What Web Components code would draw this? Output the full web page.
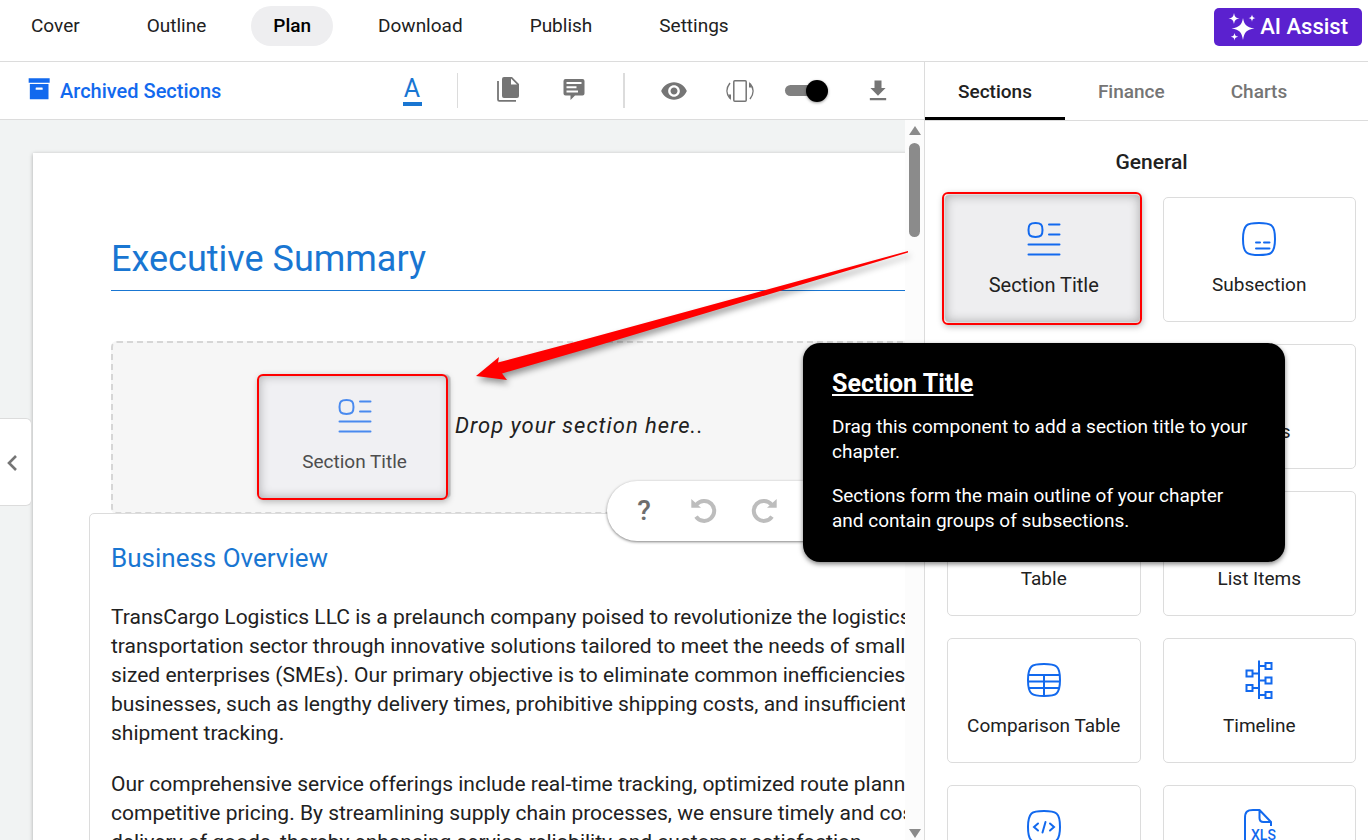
<!DOCTYPE html>
<html lang="en">
<head>
<meta charset="utf-8">
<meta name="viewport" content="width=device-width, initial-scale=1">
<title>Plan editor</title>
<style>
  html, body {
    margin: 0;
    height: 100%;
    overflow: hidden;
  }
  body {
    --blue: #1269ee;
    --heading: #1976d2;
    --line: #dcdcdc;
    --grey: #757575;
    font-family: Roboto, "Liberation Sans", sans-serif;
    font-size: 19px;
    line-height: 24px;
    color: #212121;
    background: #fff;
  }
</style>
</head>
<body>
<plan-app>
  <top-nav slot="nav">
    <nav-link>Cover</nav-link>
    <nav-link>Outline</nav-link>
    <nav-link active>Plan</nav-link>
    <nav-link>Download</nav-link>
    <nav-link>Publish</nav-link>
    <nav-link>Settings</nav-link>
    <assist-button slot="action">AI Assist</assist-button>
  </top-nav>

  <edit-toolbar slot="toolbar">Archived Sections</edit-toolbar>

  <plan-page slot="editor">
    <span slot="title">Executive Summary</span>
    <drop-zone slot="drop">
      Drop your section here..
      <section-tile slot="drag" icon="title" dragging>Section Title</section-tile>
    </drop-zone>
    <sub-section heading="Business Overview">
      <plan-text>TransCargo Logistics LLC is a prelaunch company poised to revolutionize the logistics and transportation sector through innovative solutions tailored to meet the needs of small to medium-sized enterprises (SMEs). Our primary objective is to eliminate common inefficiencies faced by businesses, such as lengthy delivery times, prohibitive shipping costs, and insufficient transparency in shipment tracking.</plan-text>
      <plan-text>Our comprehensive service offerings include real-time tracking, optimized route planning, and competitive pricing. By streamlining supply chain processes, we ensure timely and cost-effective delivery of goods, thereby enhancing service reliability and customer satisfaction.</plan-text>
    </sub-section>
  </plan-page>

  <section-panel slot="panel" heading="General">
    <section-tile icon="title" selected>Section Title</section-tile>
    <section-tile icon="subsection">Subsection</section-tile>
    <section-tile icon="text" label="Text"></section-tile>
    <section-tile icon="image">Images</section-tile>
    <section-tile icon="table">Table</section-tile>
    <section-tile icon="list">List Items</section-tile>
    <section-tile icon="table">Comparison Table</section-tile>
    <section-tile icon="timeline">Timeline</section-tile>
    <section-tile icon="code" label="Embed"></section-tile>
    <section-tile icon="xls" label="Excel"></section-tile>
  </section-panel>

  <history-bar slot="overlay"></history-bar>
  <drag-arrow slot="overlay"></drag-arrow>
  <help-tip slot="overlay" heading="Section Title">
    <p>Drag this component to add a section title to your chapter.</p>
    <p>Sections form the main outline of your chapter and contain groups of subsections.</p>
  </help-tip>
</plan-app>

<script>
// small base class: every element renders a css block and some html
class PlanElement extends HTMLElement {
  constructor() {
    super();
    this.attachShadow({ mode: "open" });
  }

  connectedCallback() {
    this.shadowRoot.innerHTML = `<style>${this.css()}</style>${this.html()}`;
  }

  css() {
    return ":host { display: block; }";
  }

  html() {
    return "<slot></slot>";
  }
}

const SQUIRCLE = "M20 4c6 0 10 .5 12.500 2.500S36 13 36 20s-1 11-3.500 13.500S26 36 20 36s-10-.5-12.500-2.500S4 27 4 20s1-11 3.500-13.500S14 4 20 4z";

// [viewBox, markup]; fill and stroke both follow currentColor
const ICONS = {
  archive: ["-1 2 24 24", `<path fill="currentColor" d="M3 3h18v4H3zM4 8h16v13H4zM9.500 11a.5.5 0 0 0-.5.5V13h6v-1.500a.5.5 0 0 0-.5-.5z" fill-rule="evenodd"/>`],
  copy: ["0 2 28 28", `<path fill="none" stroke="currentColor" stroke-width="1.800" d="M4 6v18.500a1.300 1.300 0 0 0 1.300 1.300H22"/><path fill="currentColor" fill-rule="evenodd" d="M10 2h8l7 7v12a2 2 0 0 1-2 2H10a2 2 0 0 1-2-2V4a2 2 0 0 1 2-2zM17 3.500v6h6z"/>`],
  comment: ["0 0 28 28", `<path fill="currentColor" fill-rule="evenodd" d="M5.500 2h17a2 2 0 0 1 2 2v12.500a2 2 0 0 1-2 2H15L10.500 23v-4.500h-5a2 2 0 0 1-2-2V4a2 2 0 0 1 2-2zM6.500 5v2h15V5zM6.500 9.300v2h10v-2zM6.500 13.500v2h11.500v-2z"/>`],
  eye: ["0 0 24 24", `<path fill="currentColor" d="M12 4.500C7 4.500 2.730 7.610 1 12c1.730 4.390 6 7.500 11 7.500s9.270-3.110 11-7.500c-1.730-4.390-6-7.500-11-7.500zM12 17c-2.760 0-5-2.240-5-5s2.240-5 5-5 5 2.240 5 5-2.240 5-5 5zm0-8c-1.660 0-3 1.340-3 3s1.340 3 3 3 3-1.340 3-3-1.340-3-3-3z"/>`],
  rotate: ["0 0 28 28", `<g fill="none" stroke="currentColor" stroke-width="1.500"><rect x="7.800" y="3.800" width="12.400" height="20.400" rx="1"/><path d="M4 6C0 11 0 17 4 21.500M24 22c4-5 4-11 0-15.500"/></g><path fill="currentColor" d="M2 17.500h3v6zM26 10.500h-3v-6z"/>`],
  download: ["0 0 24 24", `<path fill="currentColor" d="M18.500 9.500H15V3H9v6.500H5.500L12 16zM5 18v2h14v-2z"/>`],
  sparkle: ["0 0 28 28", `<path fill="currentColor" d="M15 5c1.500 7 3 9 11.500 10.500C18 17 16.500 19 15 27c-1.500-8-3-10-11.500-11.500C12 14 13.500 12 15 5zM6 0c.8 4 1.600 4.800 5.500 5.500C7.600 6.200 6.800 7 6 11 5.200 7 4.400 6.200.5 5.500 4.400 4.800 5.200 4 6 0zM24 1.500c.5 2.600 1.100 3.100 3.500 3.600-2.400.5-3 1-3.500 3.600-.5-2.600-1.100-3.100-3.500-3.600 2.400-.5 3-1 3.500-3.600zM6.500 20c.5 2.600 1.100 3.200 3.700 3.700-2.600.5-3.200 1.100-3.700 3.700-.5-2.600-1.100-3.200-3.700-3.700 2.600-.5 3.200-1.100 3.700-3.700z"/>`],
  undo: ["-2 -1 28 28", `<path fill="none" stroke="currentColor" stroke-width="4" d="M4.500 6.500A10 10 0 1 1 4 18.600"/><path fill="currentColor" d="M-.7 1v8.800H9z"/>`],
  chevron: ["0 0 24 24", `<path fill="none" stroke="currentColor" stroke-width="2.600" d="M16 6l-7 7 7 7"/>`],
  title: ["0 0 40 40", `<g fill="none" stroke="currentColor" stroke-width="2" stroke-linecap="round"><path d="M11.500 4c5.500 0 7 1.500 7 7s-1.500 7-7 7-7-1.500-7-7 1.500-7 7-7z"/><path d="M25 5.500h10.500M25 15.500h10.500M4.500 25.500h31M4.500 35.500h31"/></g>`],
  subsection: ["0 0 40 40", `<g fill="none" stroke="currentColor" stroke-width="2" stroke-linecap="round"><path d="${SQUIRCLE}"/><path d="M17 23.500h4M25 23.500h5.500M17 29.500h13.500"/></g>`],
  text: ["0 0 40 40", `<path fill="none" stroke="currentColor" stroke-width="2" d="M5 8h30M5 16h30M5 24h30M5 32h18"/>`],
  image: ["0 0 40 40", `<path fill="none" stroke="currentColor" stroke-width="2" d="${SQUIRCLE}M6 30l9-10 7 8 5-5 8 7"/>`],
  table: ["0 0 40 40", `<path fill="none" stroke="currentColor" stroke-width="2" d="${SQUIRCLE}M4.500 15h31M4 21.500h32M4.500 28h31M20 15v21"/>`],
  list: ["0 0 40 40", `<path fill="none" stroke="currentColor" stroke-width="2" d="M5 9h4M14 9h21M5 20h4M14 20h21M5 31h4M14 31h21"/>`],
  timeline: ["0 0 40 40", `<path fill="none" stroke="currentColor" stroke-width="2" d="M20 .5V39M20 6h6M20 20.500h6M20 35h6M14 13.500h6M14 28h6M26.500 3h6v6h-6zM26.500 17.500h6v6h-6zM26.500 32h6v6h-6zM7.500 10.500h6v6h-6zM7.500 25h6v6h-6z"/>`],
  code: ["0 0 40 40", `<g fill="none" stroke="currentColor" stroke-width="2" stroke-linecap="round"><path d="${SQUIRCLE}"/><path d="M14 16.500l-4 3.500 4 3.500M26 16.500l4 3.500-4 3.500M21.500 15l-3 10.500"/></g>`],
  xls: ["0 0 40 40", `<path fill="none" stroke="currentColor" stroke-width="2" stroke-linejoin="round" d="M6 33V11c0-6 2-8 8-8h6.500l11.500 12v4M20.500 3v8c0 3 1.500 4 4 4h7M6 33c0 3 2 4 6 4"/><text x="12" y="33" fill="currentColor" font-family="Roboto, sans-serif" font-size="14" font-weight="500">XLS</text>`]
};

class PlanIcon extends PlanElement {
  css() {
    return `
      :host { display: block; width: var(--icon-size, 28px); height: var(--icon-size, 28px); flex: none; }
      svg { display: block; width: 100%; height: 100%; overflow: visible; }
    `;
  }

  html() {
    const [box, markup] = ICONS[this.getAttribute("name")];
    return `<svg viewBox="${box}" aria-hidden="true">${markup}</svg>`;
  }
}

class PlanApp extends PlanElement {
  css() {
    return `
      :host {
        position: relative;
        display: grid;
        grid-template: auto minmax(0, 1fr) / minmax(0, 1fr) 443px;
        height: 100vh;
        overflow: hidden;
      }
      header { grid-column: 1 / -1; }
      main { display: flex; flex-direction: column; min-width: 0; min-height: 0; border-right: 1px solid var(--line); }
      .workspace { position: relative; flex: 1; display: flex; min-height: 0; background: #f1f3f3; }
      .canvas { flex: 1; min-width: 0; overflow: hidden; padding: 33px 0 0 33px; }
      .scrollbar {
        width: 19px;
        box-sizing: border-box;
        display: flex;
        flex-direction: column;
        align-items: center;
        justify-content: space-between;
        padding: 6px 0 2px;
        background: #fcfcfc;
      }
      .up, .down { border: 6px solid transparent; }
      .up { border-top: 0; border-bottom: 9px solid #8b8b8b; }
      .down { border-bottom: 0; border-top: 9px solid #8b8b8b; }
      .track { flex: 1; padding-top: 8px; }
      .thumb { width: 11px; height: 94px; border-radius: 6px; background: #8b8b8b; }
      .collapse {
        position: absolute;
        left: 0;
        top: 298px;
        width: 32px;
        height: 88px;
        padding: 0;
        border: 1px solid var(--line);
        border-left: 0;
        border-radius: 0 6px 6px 0;
        background: #fff;
        color: var(--grey);
        --icon-size: 24px;
      }
    `;
  }

  html() {
    return `
      <header><slot name="nav"></slot></header>
      <main>
        <slot name="toolbar"></slot>
        <div class="workspace">
          <div class="canvas"><slot name="editor"></slot></div>
          <div class="scrollbar"><i class="up"></i><div class="track"><div class="thumb"></div></div><i class="down"></i></div>
          <button class="collapse" aria-label="Collapse"><plan-icon name="chevron"></plan-icon></button>
        </div>
      </main>
      <slot name="panel"></slot>
      <slot name="overlay"></slot>
    `;
  }
}

class TopNav extends PlanElement {
  css() {
    return `
      :host {
        display: flex;
        justify-content: space-between;
        align-items: flex-start;
        box-sizing: border-box;
        min-height: 62px;
        padding: 6px 6px 0 9px;
        border-bottom: 1px solid var(--line);
      }
      nav { display: flex; gap: 23px; }
    `;
  }

  html() {
    return `<nav><slot></slot></nav><slot name="action"></slot>`;
  }
}

class NavLink extends PlanElement {
  css() {
    return `
      :host { display: block; }
      a { display: block; padding: 8px 22px; border-radius: 20px; color: inherit; text-decoration: none; }
      :host([active]) a { background: #eeeef0; color: #000; font-weight: 500; }
    `;
  }

  html() {
    return `<a href="#"><slot></slot></a>`;
  }
}

class AssistButton extends PlanElement {
  css() {
    return `
      :host { display: block; padding-top: 2px; }
      button {
        display: flex;
        align-items: center;
        gap: 4px;
        height: 38px;
        padding: 0 14px;
        border: 0;
        border-radius: 5px;
        background: #5b21cf;
        color: #fff;
        font: 500 22px/24px Roboto, sans-serif;
      }
    `;
  }

  html() {
    return `<button><plan-icon name="sparkle"></plan-icon><slot></slot></button>`;
  }
}

class EditToolbar extends PlanElement {
  css() {
    return `
      :host {
        display: flex;
        justify-content: space-between;
        align-items: center;
        box-sizing: border-box;
        height: 58px;
        padding: 0 24px;
        border-bottom: 1px solid var(--line);
        background: #fff;
      }
      button { display: flex; align-items: center; justify-content: center; padding: 0; border: 0; background: none; color: var(--grey); font: inherit; }
      .archive { gap: 8px; color: var(--blue); font-size: 20px; font-weight: 500; }
      .tools, .group { display: flex; align-items: center; }
      .group { gap: 22px; }
      .group button { width: 44px; height: 44px; }
      .divider { width: 1px; height: 35px; background: var(--line); margin: 0 28px 0 23px; }
      .divider.wide { width: 2px; margin: 0 27px; }
      .group .color { color: var(--heading); }
      .color span { width: 19px; border-bottom: 4px solid; font-size: 25px; line-height: 26px; text-align: center; }
      input {
        appearance: none;
        display: flex;
        align-items: center;
        justify-content: flex-end;
        width: 43px;
        height: 11px;
        margin: 0 6px 0 1px;
        border-radius: 6px;
        background: linear-gradient(to right, #808080 36px, transparent 36px);
      }
      input::before { content: ""; width: 22px; height: 22px; border-radius: 50%; background: #000; box-shadow: 0 1px 3px rgba(0, 0, 0, .4); }
    `;
  }

  html() {
    return `
      <button class="archive"><plan-icon name="archive"></plan-icon><slot></slot></button>
      <div class="tools">
        <div class="group"><button class="color" aria-label="Text color"><span>A</span></button></div>
        <i class="divider"></i>
        <div class="group">
          <button aria-label="Copy"><plan-icon name="copy"></plan-icon></button>
          <button aria-label="Comment"><plan-icon name="comment"></plan-icon></button>
        </div>
        <i class="divider wide"></i>
        <div class="group">
          <button aria-label="Preview"><plan-icon name="eye"></plan-icon></button>
          <button aria-label="Rotate"><plan-icon name="rotate"></plan-icon></button>
          <input type="checkbox" role="switch" aria-label="Show drafts" checked>
          <button class="download" aria-label="Download"><plan-icon name="download"></plan-icon></button>
        </div>
      </div>
    `;
  }
}

class PlanPage extends PlanElement {
  css() {
    return `
      :host { display: block; width: 1102px; box-sizing: border-box; min-height: 900px; padding: 82px 78px 0; background: #fff; box-shadow: 0 1px 4px rgba(0, 0, 0, .3); }
      h1 { margin: 0 0 50px; padding-bottom: 7px; border-bottom: 1px solid var(--heading); color: var(--heading); font-weight: 400; font-size: 36px; line-height: 48px; }
    `;
  }

  html() {
    return `<h1><slot name="title"></slot></h1><slot name="drop"></slot><slot></slot>`;
  }
}

class DropZone extends PlanElement {
  css() {
    return `
      :host {
        position: relative;
        display: block;
        box-sizing: border-box;
        height: 173px;
        padding: 71px 0 0 342px;
        border: 2px dashed #d6d6d6;
        border-radius: 6px;
        background: #f6f6f6;
        font-size: 22px;
        font-style: italic;
        letter-spacing: 1px;
      }
      ::slotted([slot="drag"]) { position: absolute; left: 145px; top: 31px; width: 193px; font-size: 19px; font-style: normal; letter-spacing: normal; }
    `;
  }

  html() {
    return `<slot></slot><slot name="drag"></slot>`;
  }
}

class SubSection extends PlanElement {
  css() {
    return `
      :host { display: block; position: relative; margin: -1px -22px 0; padding: 28px 21px; border: 1px solid var(--line); border-radius: 5px; background: #fff; }
      h2 { margin: 0 0 29px; color: var(--heading); font-weight: 400; font-size: 26px; line-height: 32px; }
    `;
  }

  html() {
    return `<h2>${this.getAttribute("heading")}</h2><slot></slot>`;
  }
}

class PlanText extends PlanElement {
  css() {
    return `
      :host { display: block; }
      p { margin: 0 0 22px; font-size: 21px; line-height: 29px; }
    `;
  }

  html() {
    return `<p><slot></slot></p>`;
  }
}

class SectionPanel extends PlanElement {
  css() {
    return `
      :host { display: block; min-width: 0; min-height: 0; overflow: hidden; background: #fff; }
      .tabs { display: flex; border-bottom: 1px solid var(--line); }
      .tabs button { padding: 18px 33px 13px; border: 0; border-bottom: 3px solid transparent; background: none; color: var(--grey); font: inherit; font-weight: 500; }
      .tabs button[aria-selected="true"] { border-color: #000; color: #212121; }
      h3 { margin: 29px 0 23px; padding: 0 12px 0 22px; font-size: 21px; line-height: 24px; font-weight: 500; text-align: center; }
      .tiles { display: grid; grid-template-columns: 1fr 1fr; gap: 22px; padding: 0 12px 0 22px; }
    `;
  }

  html() {
    return `
      <div class="tabs" role="tablist">
        <button role="tab" aria-selected="true">Sections</button>
        <button role="tab" aria-selected="false">Finance</button>
        <button role="tab" aria-selected="false">Charts</button>
      </div>
      <h3>${this.getAttribute("heading")}</h3>
      <div class="tiles"><slot></slot></div>
    `;
  }
}

class SectionTile extends PlanElement {
  css() {
    return `
      :host { display: block; position: relative; height: 125px; }
      button {
        display: flex;
        flex-direction: column;
        align-items: center;
        box-sizing: border-box;
        gap: 14px;
        width: 100%;
        height: 125px;
        padding: 21px 0 0;
        border: 1px solid var(--line);
        border-radius: 5px;
        background: #fff;
        color: inherit;
        font: inherit;
      }
      plan-icon { --icon-size: 40px; color: var(--blue); }
      :host([selected]) button, :host([dragging]) button { background: #eeeef0; box-shadow: inset 0 0 11px rgba(0, 0, 0, .3); }
      :host([selected]) button { margin: -3px 0 0 -3px; width: calc(100% + 3px); height: 129px; padding: 24px 0 0 3px; font-size: 20px; }
      :host([dragging]) button > * { opacity: .75; }
      :host([dragging]) button { color: #4d4d4d; background: #f0f0f3; }
      :host([selected])::after, :host([dragging])::after {
        content: "";
        position: absolute;
        inset: -5px -1px -3px -5px;
        border: 2px solid #f00;
        border-radius: 6px;
        box-shadow: 1px 2px 6px rgba(0, 0, 0, .25);
        pointer-events: none;
      }
      :host([dragging])::after { inset: 0 3px -1px -1px; }
    `;
  }

  html() {
    const label = this.getAttribute("label");
    return `<button${label ? ` aria-label="${label}"` : ""}><plan-icon name="${this.getAttribute("icon")}"></plan-icon><slot></slot></button>`;
  }
}

class HistoryBar extends PlanElement {
  css() {
    return `
      :host {
        position: absolute;
        left: 607px;
        top: 481px;
        display: flex;
        align-items: center;
        box-sizing: border-box;
        width: 240px;
        height: 60px;
        padding: 0 7px;
        border-radius: 30px;
        background: #fff;
        box-shadow: 0 1px 3px rgba(0, 0, 0, .5);
      }
      button { display: flex; align-items: center; justify-content: center; width: 60px; height: 60px; padding: 0; border: 0; background: none; color: #6e6e6e; font: 500 28px/32px Roboto, sans-serif; }
      button:disabled { color: #bdbdbd; }
      .redo plan-icon { transform: scaleX(-1); }
    `;
  }

  html() {
    return `
      <button aria-label="Help">?</button>
      <button aria-label="Undo" disabled><plan-icon name="undo"></plan-icon></button>
      <button class="redo" aria-label="Redo" disabled><plan-icon name="undo"></plan-icon></button>
    `;
  }
}

// pointer from the panel tile to its place in the drop zone
class DragArrow extends PlanElement {
  css() {
    return `
      :host { position: absolute; left: 476px; top: 250px; width: 434px; height: 130px; pointer-events: none; }
      svg { display: block; overflow: visible; filter: drop-shadow(2px 4px 3px rgba(0, 0, 0, .4)); }
    `;
  }

  html() {
    return `<svg width="434" height="130" aria-hidden="true"><path fill="#f00" d="M0 126L23 107 22 112.500 114 88 432 1v1.500L114 98 26 123.500 31 130z"/></svg>`;
  }
}

class HelpTip extends PlanElement {
  css() {
    return `
      :host {
        position: absolute;
        left: 803px;
        top: 343px;
        box-sizing: border-box;
        width: 482px;
        padding: 26px 29px 29px;
        border-radius: 17px;
        background: #000;
        color: #fff;
        line-height: 25px;
        box-shadow: 0 2px 5px rgba(0, 0, 0, .5);
      }
      h4 { margin: 0 0 16px; font-size: 25px; line-height: 29px; font-weight: 700; text-decoration: underline; }
      ::slotted(p) { margin: 0 0 19px; }
      ::slotted(p:last-child) { margin: 0; }
    `;
  }

  html() {
    return `<h4>${this.getAttribute("heading")}</h4><slot></slot>`;
  }
}

customElements.define("plan-icon", PlanIcon);
customElements.define("plan-app", PlanApp);
customElements.define("top-nav", TopNav);
customElements.define("nav-link", NavLink);
customElements.define("assist-button", AssistButton);
customElements.define("edit-toolbar", EditToolbar);
customElements.define("plan-page", PlanPage);
customElements.define("drop-zone", DropZone);
customElements.define("sub-section", SubSection);
customElements.define("plan-text", PlanText);
customElements.define("section-panel", SectionPanel);
customElements.define("section-tile", SectionTile);
customElements.define("history-bar", HistoryBar);
customElements.define("drag-arrow", DragArrow);
customElements.define("help-tip", HelpTip);
</script>
</body>
</html>
